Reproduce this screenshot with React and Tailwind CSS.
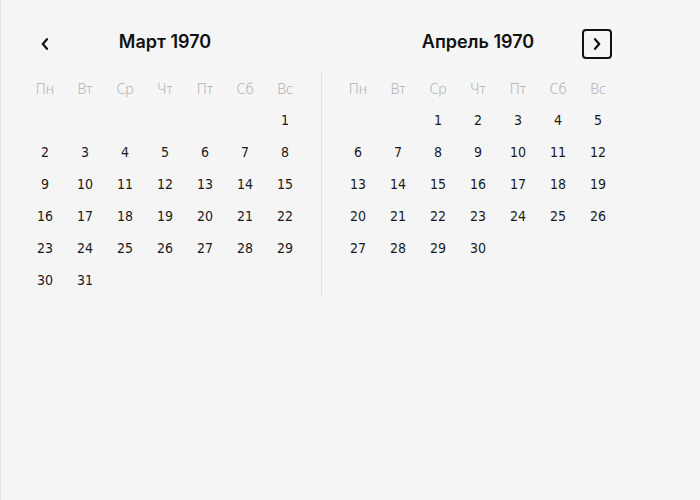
import React from "react";

const WEEK = ["Пн", "Вт", "Ср", "Чт", "Пт", "Сб", "Вс"];

function Chevron({ dir }) {
  return (
    <svg width="8" height="12" viewBox="0 0 8 12" fill="none">
      <path
        d={dir === "left" ? "M6 1.2L1.8 6L6 10.8" : "M2 1.2L6.2 6L2 10.8"}
        stroke="#111"
        strokeWidth="2.2"
        strokeLinecap="round"
        strokeLinejoin="round"
      />
    </svg>
  );
}

function MonthGrid({ offset, days }) {
  const cells = [];
  for (let i = 0; i < offset; i++) cells.push(null);
  for (let d = 1; d <= days; d++) cells.push(d);
  return (
    <div className="grid grid-cols-[repeat(7,40px)] auto-rows-[32px]">
      {WEEK.map((w) => (
        <div
          key={w}
          className="flex items-center justify-center text-[14px] font-light text-[#b3b3b3] font-['Noto_Sans',sans-serif]"
        >
          {w}
        </div>
      ))}
      {cells.map((d, i) => (
        <div
          key={i}
          className="flex items-center justify-center text-[14px] text-[#1a1a1a] font-['DejaVu_Sans_Condensed','DejaVu_Sans',sans-serif]"
        >
          {d}
        </div>
      ))}
    </div>
  );
}

function Header({ title, prev, next }) {
  return (
    <div className="grid grid-cols-[40px_1fr_40px] h-[30px] items-center w-[280px]">
      <div className="flex justify-center">
        {prev && (
          <button className="w-[30px] h-[30px] flex items-center justify-center">
            <Chevron dir="left" />
          </button>
        )}
      </div>
      <div className="text-center text-[18px] font-semibold text-[#111] font-['Inter',sans-serif] leading-none -mt-[5px]">
        {title}
      </div>
      <div className="flex justify-center">
        {next && (
          <button className="w-[30px] h-[30px] flex items-center justify-center border-2 border-[#111] rounded-[4px] -ml-[3px]">
            <Chevron dir="right" />
          </button>
        )}
      </div>
    </div>
  );
}

export default function App() {
  return (
    <div className="w-[700px] h-[500px] bg-[#f5f5f5] border-l border-[#e2e2e2] pl-6 pt-[29px]">
      <div className="flex">
        <div className="flex flex-col">
          <Header title="Март 1970" prev />
          <div className="mt-[13px] pr-4 border-r border-[#e4e4e4]">
            <MonthGrid offset={6} days={31} />
          </div>
        </div>
        <div className="flex flex-col">
          <div className="pl-[16px]">
            <Header title="Апрель 1970" next />
          </div>
          <div className="mt-[13px] pl-4">
            <MonthGrid offset={2} days={30} />
          </div>
        </div>
      </div>
    </div>
  );
}
